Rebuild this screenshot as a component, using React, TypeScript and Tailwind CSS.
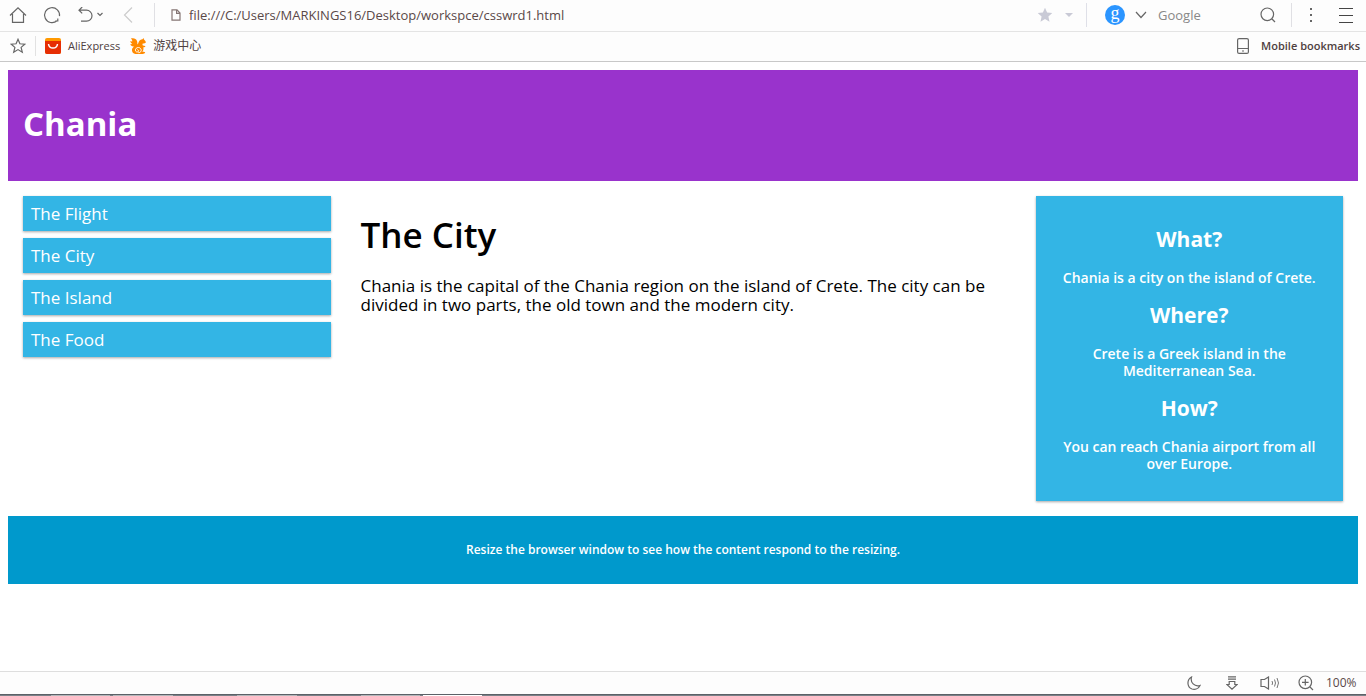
import type { ReactNode } from "react";

const ui = "font-['Open_Sans','Noto_Sans_CJK_SC',sans-serif]";

type IconProps = { w: number; h: number; children: ReactNode; className?: string };

function Icon({ w, h, children, className = "text-[#666]" }: IconProps) {
  return (
    <svg
      width={w}
      height={h}
      viewBox={`0 0 ${w} ${h}`}
      fill="none"
      stroke="currentColor"
      strokeWidth="1.2"
      className={`block shrink-0 ${className}`}
      aria-hidden="true"
    >
      {children}
    </svg>
  );
}

function IconButton({ label, className = "", children }: { label: string; className?: string; children: ReactNode }) {
  return (
    <button type="button" aria-label={label} className={`flex shrink-0 items-center justify-center ${className}`}>
      {children}
    </button>
  );
}

function Toolbar() {
  return (
    <div className="flex h-8 items-center border-b border-[#e4e4e4] bg-[#fdfdfd] pb-0.5">
      <IconButton label="Home" className="w-9">
        <Icon w={18} h={18}>
          <path d="M1 9.5 9 1.8 17 9.5M3.5 8v8.4h11V8" />
        </Icon>
      </IconButton>
      <IconButton label="Reload" className="w-8">
        <Icon w={18} h={18}>
          <path d="M16.5 10.2A7.5 7.5 0 1 0 14 14.8M14.8 12.4v2.6h-2.6" />
        </Icon>
      </IconButton>
      <IconButton label="Undo" className="w-11 gap-1">
        <Icon w={16} h={16}>
          <path d="M2 3.2h7.5a5.3 5.3 0 0 1 0 11H4M5.2 0 2 3.2l3.2 3.2" />
        </Icon>
        <Icon w={6} h={5}>
          <path d="m.5 1 2.500 2.500L5.500 1" />
        </Icon>
      </IconButton>
      <IconButton label="Back" className="w-8">
        <Icon w={10} h={18} className="text-[#ccc]">
          <path d="M9 1.500 1.500 9 9 16.500" />
        </Icon>
      </IconButton>
      <span className="ml-2.5 h-6 w-px bg-[#e0e0e4]" />
      <form className="flex flex-1 items-center" onSubmit={(e) => e.preventDefault()}>
        <Icon w={10} h={12} className="ml-4 text-[#857674]">
          <path d="M1 .8h5L9 4v7.200H1zM5.600.8v3.500H9" />
        </Icon>
        <input
          aria-label="Address"
          className={`ml-2 min-w-0 flex-1 bg-transparent text-[13px] leading-5 text-[#5a4848] outline-none ${ui}`}
          defaultValue="file:///C:/Users/MARKINGS16/Desktop/workspce/csswrd1.html"
        />
      </form>
      <IconButton label="Bookmark this page" className="w-6">
        <Icon w={16} h={16} className="text-[#c9cad6]">
          <path
            fill="currentColor"
            stroke="none"
            d="m8 .8 2.1 4.8 5.2.5-3.9 3.5 1.1 5.2L8 12.1l-4.5 2.7 1.1-5.2L.7 6.1l5.2-.5z"
          />
        </Icon>
      </IconButton>
      <IconButton label="Bookmark options" className="w-6">
        <Icon w={8} h={4} className="text-[#c9cad6]">
          <path fill="currentColor" stroke="none" d="M0 0h8L4 4z" />
        </Icon>
      </IconButton>
      <span className="ml-[5px] h-6 w-px bg-[#dfe0e8]" />
      <form className="flex items-center" onSubmit={(e) => e.preventDefault()}>
        <button type="button" aria-label="Search engine" className="ml-[18px] flex items-center gap-2.5">
          <span className="flex size-5 items-center justify-center rounded-full bg-[#2b95ff] pb-1 font-['Liberation_Serif',serif] text-[18px] leading-none text-white">
            g
          </span>
          <Icon w={12} h={8}>
            <path d="m1 1 5 5.500L11 1" />
          </Icon>
        </button>
        <input
          aria-label="Search"
          placeholder="Google"
          className={`ml-[11px] w-[94px] bg-transparent text-[13px] leading-5 outline-none placeholder:text-[#888] ${ui}`}
        />
        <IconButton label="Search" className="ml-1 w-6">
          <Icon w={16} h={16}>
            <circle cx="7.3" cy="7.3" r="6.3" />
            <path d="m12 12 3 3" />
          </Icon>
        </IconButton>
      </form>
      <span className="ml-[11px] h-6 w-px bg-[#e0e0e4]" />
      <IconButton label="More" className="ml-1 w-[30px]">
        <Icon w={2} h={14}>
          <path fill="currentColor" stroke="none" d="M0 0h2v2H0zM0 6h2v2H0zM0 12h2v2H0z" />
        </Icon>
      </IconButton>
      <IconButton label="Menu" className="w-10">
        <Icon w={14} h={16} className="text-[#444]">
          <path d="M0 1.500h14M0 8.500h14M0 15.500h14" strokeWidth="1" />
        </Icon>
      </IconButton>
    </div>
  );
}

function Bookmarks() {
  return (
    <div
      className={`flex h-[30px] items-center border-b border-[#c8c8c8] bg-[#fdfdfd] pb-px text-[12px] text-[#4f4040] ${ui}`}
    >
      <IconButton label="Bookmarks" className="w-[35px]">
        <Icon w={16} h={16}>
          <path d="m8 1.300 1.900 4.500 4.900.4-3.700 3.200 1.200 4.800L8 11.600l-4.300 2.600 1.200-4.800-3.700-3.200 4.900-.4z" />
        </Icon>
      </IconButton>
      <span className="h-5 w-px bg-[#e2e2e2]" />
      <a href="#aliexpress" className="ml-[9px] flex items-center gap-[7px] font-medium">
        <Icon w={16} h={16}>
          <rect width="16" height="16" rx="2" fill="#f90" stroke="none" />
          <path d="M0 3h16v11a2 2 0 0 1-2 2H2a2 2 0 0 1-2-2z" fill="#e62e04" stroke="none" />
          <path d="M3.500 6c.6 5.400 8.400 5.400 9 0" stroke="#fff" strokeWidth="1.500" />
        </Icon>
        <span className="text-[11px]">AliExpress</span>
      </a>
      <a href="#games" className="ml-2.5 flex items-center gap-[7px]">
        <Icon w={16} h={16}>
          <path
            fill="#ff8a00"
            stroke="none"
            d="M.8.6C3.600-.2 6.200.6 7 2.900c.5 1.500.2 2.700.6 3.600.4-.6.700-1.500 1.100-2.500C9.500 2 11 1.200 12.500 1.200L13.600 0l.4 1.600c.9.6 1.500 1.600 2 2.700-.6 1-1.800 1.200-3.200 1.300-.5.500-.4 1.300.1 2 .9.300 1.800.2 2.600.7-.3.900-1.100 1.200-2.200 1 .5 2-.1 3.400-1.100 4.500 1 .1 2.200 0 3 .5-.3 1-1.200 1.600-2.600 1.600H5.500C3 15.700 1.800 14 2 11.800c.1-1.400.9-2.500 2-3.300C2 8.700.6 7.700.2 6c.9.300 1.600.2 2-.2C1 5.200.3 4.300.4 3c.7.500 1.400.6 1.900.3C2.300 2.200 1.800 1.300.8.600z"
          />
          <path
            d="M8.300 14.700c2.200.1 3.200-1.500 2.800-3.100-.4-1.700-2.200-2.500-3.900-1.900-1.600.6-2.200 2.300-1.500 3.500.6 1 2.200 1.100 2.700.1.400-.8-.1-1.600-.9-1.600"
            stroke="#fff"
            strokeWidth="1"
          />
        </Icon>
        <span>游戏中心</span>
      </a>
      <a href="#mobile" className="ml-auto flex items-center gap-3 pr-1.5 font-semibold">
        <Icon w={12} h={16}>
          <rect x=".6" y=".6" width="10.800" height="14.800" rx="1.500" />
          <path d="M1 10.500h10M5 13h2" />
        </Icon>
        <span className="text-[11px]">Mobile bookmarks</span>
      </a>
    </div>
  );
}

const links = ["The Flight", "The City", "The Island", "The Food"];

const facts = [
  { title: "What?", text: "Chania is a city on the island of Crete." },
  { title: "Where?", text: "Crete is a Greek island in the Mediterranean Sea." },
  { title: "How?", text: "You can reach Chania airport from all over Europe." },
];

function Page() {
  return (
    <main className="flex-1 bg-white p-2 font-['Open_Sans',sans-serif]">
      <header className="bg-[#9933cc] px-[15px] pt-[34px] pb-[38px] text-white">
        <h1 className="text-[33px] leading-[39px] font-bold">Chania</h1>
      </header>
      <div className="grid grid-cols-4">
        <nav className="p-[15px]">
          <ul className="flex flex-col gap-[7px]">
            {links.map((label) => (
              <li key={label}>
                <a
                  href="#"
                  className="block bg-[#33b5e5] p-2 text-[17px] leading-[19px] text-white shadow-[0_1px_3px_rgba(0,0,0,0.12),0_1px_2px_rgba(0,0,0,0.24)]"
                >
                  {label}
                </a>
              </li>
            ))}
          </ul>
        </nav>
        <article className="col-span-2 p-[15px] text-black">
          <h1 className="mt-5 text-[35px] leading-[38px] font-semibold">The City</h1>
          <p className="mt-[22px] text-[17px] leading-[19px]">
            Chania is the capital of the Chania region on the island of Crete. The city can be divided in two parts,
            the old town and the modern city.
          </p>
        </article>
        <div className="p-[15px]">
          <aside className="bg-[#33b5e5] px-[15px] pt-[14px] pb-[29px] text-center text-white shadow-[0_1px_3px_rgba(0,0,0,0.12),0_1px_2px_rgba(0,0,0,0.24)]">
            {facts.map((fact) => (
              <section key={fact.title} className="pt-[17px]">
                <h2 className="text-[21px] leading-[25px] font-bold">{fact.title}</h2>
                <p className="mt-[17px] text-[14px] leading-[17px] font-semibold">{fact.text}</p>
              </section>
            ))}
          </aside>
        </div>
      </div>
      <footer className="bg-[#0099cc] px-[15px] py-[27px] text-center text-[12px] leading-[14px] font-semibold text-white">
        <p>Resize the browser window to see how the content respond to the resizing.</p>
      </footer>
    </main>
  );
}

function StatusBar() {
  return (
    <div className={`flex h-[23px] items-center justify-end border-t border-[#dedede] bg-[#fdfdfd] pr-3 ${ui}`}>
      <IconButton label="Night mode" className="w-10">
        <Icon w={14} h={14}>
          <path d="M4.500 1C-.3 3.500-.3 11.200 5 13c3.200 1 6.600-.4 8-3.500C7.500 11 3 6.500 4.500 1z" />
        </Icon>
      </IconButton>
      <IconButton label="Downloads" className="w-9">
        <Icon w={12} h={14}>
          <path d="M2 .8h8M2 3.200h8M3.200 5.500h5.600v3h2.400L6 13.200.8 8.500h2.400z" />
        </Icon>
      </IconButton>
      <IconButton label="Sound" className="w-10">
        <Icon w={20} h={14}>
          <path d="M1 3.500h3.500L8.500 1v12l-4-2.500H1z" />
          <path d="M12 5q1.200 2 0 4M14.500 3.500q2 3.500 0 7M17 2q3 5 0 10" strokeWidth=".9" />
        </Icon>
      </IconButton>
      <button type="button" className="ml-2 flex items-center gap-3 text-[12px] leading-4 text-[#5a4848]">
        <Icon w={16} h={16}>
          <circle cx="7.300" cy="7.300" r="6.300" />
          <path d="m12 12 3 3M4 7.300h6.600M7.300 4v6.600" />
        </Icon>
        <span className="w-7">100%</span>
      </button>
    </div>
  );
}

function TaskbarEdge() {
  return (
    <div className="flex h-0.5 border-t border-[#5c6167] bg-[#7a8188] pl-[51px]">
      <span className="mr-[3px] w-[59px] bg-[#b4b7ba]" />
      <span className="mr-16 w-[60px] bg-[#b4b7ba]" />
      <span className="mr-16 w-[60px] bg-[#b4b7ba]" />
      <span className="mr-[3px] w-[59px] bg-[#b4b7ba]" />
      <span className="w-[59px] bg-white" />
    </div>
  );
}

export default function App() {
  return (
    <div className="flex min-h-screen flex-col bg-white">
      <Toolbar />
      <Bookmarks />
      <Page />
      <StatusBar />
      <TaskbarEdge />
    </div>
  );
}
